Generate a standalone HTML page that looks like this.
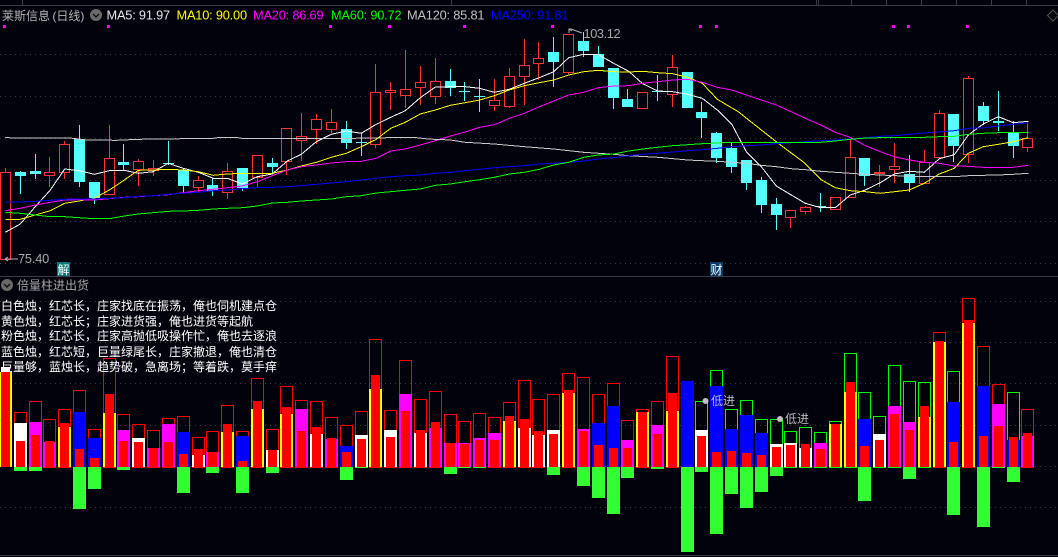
<!DOCTYPE html>
<html><head><meta charset="utf-8">
<style>
html,body{margin:0;padding:0;background:#02020c;width:1058px;height:557px;overflow:hidden}
svg{display:block;position:absolute;left:0;top:0}
svg text{font-family:"Liberation Sans","Noto Sans CJK SC",sans-serif;font-size:12.8px;letter-spacing:-.2px}
svg .z{font-size:12px;letter-spacing:0}
.c text{font-size:12px;fill:#fff;letter-spacing:0}
</style></head><body>
<svg id="s" width="1058" height="557" viewBox="0 0 1058 557" xmlns="http://www.w3.org/2000/svg">
<g id="g"></g>
<g id="l"></g>
<g id="t">
<text class="z" x="2" y="20" fill="#b4b4b4" style="word-spacing:-1px">莱斯信息 (日线)</text>
<circle cx="96" cy="15" r="6" fill="#6a6a6a"/><path d="M93 14l3 3 3-3" fill="none" stroke="#111" stroke-width="1.4"/>
<text x="106.5" y="19.5" fill="#e8e8e8">MA5: 91.97</text>
<text x="176.5" y="19.5" fill="#ffff00">MA10: 90.00</text>
<text x="253" y="19.5" fill="#ff00ff">MA20: 86.69</text>
<text x="331" y="19.5" fill="#00ff00">MA60: 90.72</text>
<text x="407" y="19.5" fill="#c0c0c0">MA120: 85.81</text>
<text x="491" y="19.5" fill="#0000ff">MA250: 91.81</text>
<path d="M1053 10l5.500 5.500-5.500 5.500-5.500-5.500z" fill="none" stroke="#555"/>
<path d="M5 259h13M5 259l3-2M5 259l3 2" stroke="#b0b0b0" fill="none"/>
<text x="18" y="263" fill="#a8a8a8">75.40</text>
<path d="M569 33v-4h2l11 4M569 29l3 2" stroke="#b0b0b0" fill="none"/>
<text x="583.5" y="38" fill="#a8a8a8" style="letter-spacing:-.4px">103.12</text>
<rect x="57" y="262" width="13" height="14" fill="#007a78"/><text class="z" x="57.5" y="274" fill="#fff">解</text>
<rect x="710" y="262" width="13" height="14" fill="#0a3c68"/><text class="z" x="710.5" y="274" fill="#fff">财</text>
<circle cx="7" cy="285" r="6" fill="#6a6a6a"/><path d="M4 284l3 3 3-3" fill="none" stroke="#111" stroke-width="1.4"/>
<text class="z" x="17" y="289.5" fill="#a8a8a8">倍量柱进出货</text>
</g>
<g id="b"></g>
<g class="c">
<text x="1" y="310">白色烛，红芯长，庄家找底在振荡，俺也伺机建点仓</text>
<text x="1" y="325.5">黄色烛，红芯长；庄家进货强，俺也进货等起航</text>
<text x="1" y="340">粉色烛，红芯长，庄家高抛低吸操作忙，俺也去逐浪</text>
<text x="1" y="356">蓝色烛，红芯短，巨量绿尾长，庄家撤退，俺也清仓</text>
<text x="1" y="371">巨量够，蓝烛长，趋势破，急离场；等着跌，莫手痒</text>
</g>
<circle cx="705.5" cy="401" r="3" fill="#c0c0c0"/><text class="z" x="711" y="405" fill="#b8b8c8">低进</text>
<circle cx="780" cy="419" r="3" fill="#c0c0c0"/><text class="z" x="785" y="423" fill="#b8b8b8">低进</text>
</svg>
<script>
var NS='http://www.w3.org/2000/svg';
function add(p,n,a){var e=document.createElementNS(NS,n);for(var k in a)e.setAttribute(k,a[k]);document.getElementById(p).appendChild(e);return e}
function cx(i){return Math.round(5.4+14.82*i-5.5)}
// frame lines
[5,276,555].forEach(function(y){add('g','path',{d:'M0 '+(y+.5)+'H1058',stroke:'#3a3a3e'})});
[22,816,818,851,886,921,956,991,1026,451].forEach(function(x){add('g','path',{d:'M'+(x+.5)+' 0V5',stroke:'#3a3a3e'})});
[54,96,138,180,221,263,301,342,383,425,466,507].forEach(function(y){add('g','path',{d:'M0 '+(y+.5)+'H1058',stroke:'#3c3c3c','stroke-dasharray':'1 4'})});
// magenta dots
[4.3,108,330,389.3,464.3,552.3,700.7,716.3,893.3,908.3,967.3].forEach(function(x){add('g','rect',{x:Math.round(x-1.5),y:25,width:3,height:3,fill:'#ff00ff'})});
// candles: type, top, bottom, high, low
var C=[
'r,172,259,168,259','c,172,176,171,194','c,171,174,154,179','r,172,175,157,187','r,144,172,141,179','c,139,182,125,187','c,182,198,182,204','r,158,194,125,194','c,162,165,144,170','r,161,169,159,186','r,168,170,160,176','c,163,164,141,165','c,170,186,168,193','r,180,187,176,192','c,185,191,178,196','r,171,192,163,199','c,168,188,168,191','r,155,177,155,187','c,163,167,158,173','r,128,161,128,175','r,136,140,113,161','r,119,129,114,144','r,122,129,109,133','c,129,143,121,149',
'c,142,143,133,156','r,92,144,64,148','r,90,92,82,110','r,89,95,50,108','r,82,87,66,105','r,81,96,58,104','c,81,88,69,96','c,91,92,82,101','c,96,97,79,112','r,100,105,79,111','r,76,106,68,108','r,65,76,39,105','r,58,63,42,80','c,52,62,37,87','r,34,72,34,74','c,41,51,32,57','c,54,67,46,67','c,68,98,68,109','c,99,107,89,107','r,92,108,92,108','c,91,92,75,101','r,67,94,55,107','c,72,108,72,108','c,112,118,102,138',
'c,133,158,132,163','c,148,167,143,173','c,160,183,160,190','c,180,205,177,213','c,204,215,198,230','r,210,217,210,228','r,207,211,206,214','c,206,207,193,212','r,197,209,197,209','r,157,197,139,197','c,158,176,158,186','R,172,174,165,187','r,166,169,143,183','c,174,183,155,192','r,162,183,150,183','r,113,157,110,157','c,114,146,114,162','r,78,154,76,163','c,106,121,102,125','c,121,123,91,131','c,133,146,121,158','r,138,147,123,152'];
C.forEach(function(s,i){var a=s.split(','),t=a[0],T=+a[1],B=+a[2],H=+a[3],L=+a[4],x=cx(i),col=t=='c'?'#54ffff':'#ff3232';
 var m=x+5.5;
 if(H<T)add('g','path',{d:'M'+m+' '+H+'V'+T,stroke:col});
 if(L>B)add('g','path',{d:'M'+m+' '+B+'V'+L,stroke:col});
 if(t=='c'){add('g','rect',{x:x,y:T,width:11,height:Math.max(1,B-T),fill:col})}
 else if(t=='R'){add('g','rect',{x:x,y:T,width:11,height:B-T,fill:col})}
 else add('g','rect',{x:x+.5,y:T+.5,width:10,height:B-T,fill:'#02020c',stroke:col})
});
// lines
function P(o,a){var r=[];for(var j=0;j<a.length;j+=2)r.push((o+a[j]/3).toFixed(1)+' '+(a[j+1]/3).toFixed(1));return r}
function line(col,segs){var pts=[];segs.forEach(function(s){pts=pts.concat(P(s[0],s[1]))});add('l','path',{d:'M'+pts.join('L'),stroke:col,fill:'none','shape-rendering':'crispEdges'})}
line('#ffffff',[[0,[16,697,61,672,106,620,151,570,194,507,238,512,283,523,328,512,373,511,415,520,460,515,505,490,550,505,595,517,640,535,682,535,727,552,772,530,817,522,862,483,904,463,949,425,994,403,1039,393]],[353,[25,400,70,373,113,352,157,332,202,293,247,261,292,260,337,260,380,265,424,277,469,268,514,250,559,233,602,215,647,173,692,163,736,164,782,190,827,214,869,251,914,273,959,275,1004,283,1048,295]],[705,[37,330,80,372,124,455,169,500,214,558,259,585,301,610,347,623,391,623,436,585,481,570,526,548,568,522,613,514,658,517,703,476,748,464,790,405,835,372,880,350,925,368,970,364]]]);
line('#ffff00',[[0,[16,658,61,658,106,645,151,632,194,610,238,603,283,595,328,570,373,540,415,511,460,510,505,508,550,510,595,515,640,526,682,522,727,520,772,520,817,520,862,510,904,498,949,487,994,472,1039,460]],[353,[25,440,70,418,113,385,157,367,202,342,247,330,292,316,337,308,380,300,424,287,469,270,514,257,559,248,602,240,647,225,692,215,736,211,782,215,827,216,869,214,914,218,959,221,1004,232,1048,250]],[705,[37,298,100,335,150,375,220,430,300,490,350,540,391,563,436,572,481,575,526,580,568,575,613,570,658,550,703,522,748,505,790,460,835,440,880,433,925,425,970,413]]]);
line('#ff00ff',[[0,[16,632,61,625,106,615,151,607,194,600,238,599,283,600,328,596,373,592,415,590,505,584,550,578,595,572,640,568,682,563,727,558,772,545,817,527,862,510,904,500,949,495,994,489,1039,485]],[353,[25,484,70,475,113,453,157,447,202,435,247,422,292,408,337,396,380,382,424,374,469,355,514,340,559,320,602,303,647,285,692,277,736,263,782,258,827,257,869,250,914,245,959,240,1004,238,1048,247]],[705,[37,262,80,270,124,285,169,300,214,315,259,335,301,355,347,375,391,397,436,412,481,437,526,455,568,470,613,480,658,487,703,490,748,498,790,499,835,502,880,502,925,502,970,496]]]);
line('#c8c8c8',[[0,[16,412,36,414,210,414,260,420,350,421,415,418,640,415,660,412,705,412,725,415,1059,415]],[353,[180,412,225,417,292,420,337,427,424,432,514,440,602,447,692,457,782,463,827,467,914,472,1004,480,1048,482]],[705,[37,484,80,487,124,490,169,496,214,500,259,506,301,509,347,514,391,517,436,520,481,523,526,525,568,527,613,528,658,530,703,530,748,530,790,527,835,526,880,525,925,523,970,520]]]);
line('#0000ff',[[0,[16,607,61,606,106,604,151,601,194,598,238,597,283,597,328,595,373,593,415,589,460,587,505,583,550,580,595,577,640,572,682,570,727,566,772,563,817,562,862,560,904,557,949,553,994,549,1039,545]],[353,[25,540,70,535,113,530,157,527,202,525,247,520,292,517,337,512,380,508,424,503,469,500,514,497,559,492,602,490,647,487,692,483,736,477,782,473,827,467,869,463,914,460,959,456,1004,452,1048,449]],[705,[37,445,80,440,124,437,169,435,214,431,259,428,301,425,347,422,391,420,436,417,481,413,526,409,568,407,613,403,658,399,703,396,748,392,790,385,835,384,880,378,925,373,970,368]]]);
line('#00ff00',[[0,[16,637,61,640,106,645,151,650,194,650,238,653,283,656,328,656,373,648,415,642,460,638,505,634,550,633,595,631,640,627,682,625,727,623,772,618,817,609,862,607,904,603,949,600,994,597,1039,590]],[353,[25,587,70,579,113,575,157,571,202,567,247,556,292,552,337,545,380,539,424,532,469,522,514,517,559,508,602,495,647,487,692,472,736,465,782,462,827,453,869,447,914,442,959,437,1004,434,1048,431]],[705,[80,427,347,427,391,423,436,418,481,414,526,413,613,412,658,412,703,410,748,409,790,403,835,400,880,398,970,398]]]);
// volume bars: frameColor, frameTop, solidColor, solidTop, redTop, greenBottom (zoom units)
var Y='#ffff00',W='#ffffff',M='#ff00ff',U='#0000ff';
var V=[
['r',0,Y,292,292,0],['r',412,W,444,498,587],['r',377,M,441,480,587],['r',433,M,501,498,0],['r',403,Y,456,444,0],['r',346,U,411,522,702],['r',463,U,489,549,642],['r',250,Y,414,357,0],['r',418,M,465,498,585],['r',448,W,489,501,0],['r',466,M,519,519,0],['r',430,M,447,501,0],['r',424,U,471,537,654],['r',487,W,540,522,0],['r',469,M,531,531,594],['r',391,Y,471,447,0],['r',469,U,483,558,654],['r',310,Y,402,378,0],['r',463,W,525,525,594],['r',334,Y,417,396,0],['r',376,M,402,468,0],['r',379,W,477,456,0],['r',427,M,492,489,0],['r',451,U,513,531,615],
['r',409,W,480,492,579],['r',193,Y,342,300,0],['r',406,W,465,486,0],['r',256,M,357,408,0],['r',373,W,474,465,0],['r',349,M,459,441,0],['r',418,M,504,504,597],['r',439,M,504,507,579],['r',415,M,489,495,579],['r',427,M,474,495,0],['r',382,Y,438,423,0],['r',316,W,459,432,0],['r',373,W,480,468,0],['r',358,W,465,477,600],['r',295,Y,354,345,0],['r',307,M,462,468,633],['r',358,U,444,510,669],['r',325,U,393,519,717],['r',436,M,495,519,609],['r',403,Y,411,411,0],['r',379,M,450,477,582],['r',244,Y,408,354,0],['r',0,U,318,576,831],['g',379,W,465,483,591],
['g',286,U,333,531,777],['g',403,U,462,528,657],['g',376,U,420,534,699],['g',433,U,474,540,651],['g',433,W,507,516,603],['g',469,W,504,510,0],['g',457,W,519,507,0],['g',472,M,504,522,0],['g',439,Y,447,447,0],['g',235,Y,351,321,0],['g',352,U,432,513,678],['g',424,W,477,495,0],['g',271,M,393,417,0],['g',319,M,441,465,612],['g',322,Y,426,393,0],['r',172,Y,201,198,0],['g',289,U,381,501,720],['r',70,Y,144,135,0],['r',214,U,333,483,756],['r',327,M,387,453,579],['g',352,U,495,486,621],['r',403,M,483,474,0]];
function y(z){return Math.round(275+z/3)}
var base=467;
V.forEach(function(v,i){var x=Math.round(5.4+14.82*i-6.5);
 if(v[1])add('b','rect',{x:x+.5,y:y(v[1])+.5,width:12,height:base-y(v[1]),fill:'none',stroke:v[0]=='r'?'#ff0000':'#00ff00'});
 add('b','rect',{x:x,y:y(v[3]),width:13,height:base-y(v[3]),fill:v[2]});
 if(v[5])add('b','rect',{x:x,y:base,width:13,height:y(v[5])-base,fill:'#32ff32'});
 if(v[4]<576)add('b','rect',{x:x+2,y:y(v[4]),width:9,height:base-y(v[4]),fill:'#ff0000'});
});
add('b','rect',{x:1,y:367,width:9,height:5,fill:'#ffffff'});
</script>
</body></html>
